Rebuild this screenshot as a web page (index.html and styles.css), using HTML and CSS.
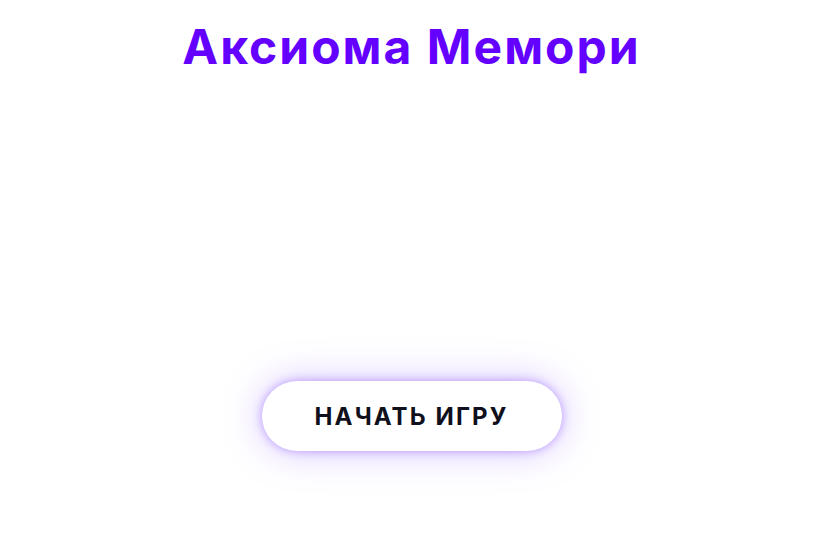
FILE: index.html
```html
<!DOCTYPE html>
<html lang="ru">
<head>
<meta charset="utf-8">
<title>Аксиома Мемори</title>
<link rel="stylesheet" href="styles.css">
</head>
<body>
<main class="app">
  <h1 class="title">Аксиома Мемори</h1>
  <div class="board"></div>
  <button class="start-btn" type="button">НАЧАТЬ ИГРУ</button>
</main>
</body>
</html>
```
FILE: styles.css
```css
html, body {
  margin: 0;
  padding: 0;
  background: #ffffff;
}
.app {
  width: 823px;
  min-height: 550px;
  display: flex;
  flex-direction: column;
  align-items: center;
  font-family: "Inter", "DejaVu Sans", sans-serif;
}
.title {
  margin: 22px 0 0;
  font-size: 48px;
  line-height: 50px;
  font-weight: 700;
  color: #6400ff;
  letter-spacing: 2px;
}
.board {
  height: 309px;
}
.start-btn {
  width: 300px;
  height: 70px;
  border: none;
  border-radius: 35px;
  background: #ffffff;
  box-shadow: 0 0 10px rgba(120, 60, 255, 0.45), 0 0 38px rgba(140, 90, 255, 0.35);
  font-family: "Inter", "DejaVu Sans", sans-serif;
  font-size: 24px;
  font-weight: 700;
  letter-spacing: 2.1px;
  color: #10101c;
  cursor: pointer;
}
```
